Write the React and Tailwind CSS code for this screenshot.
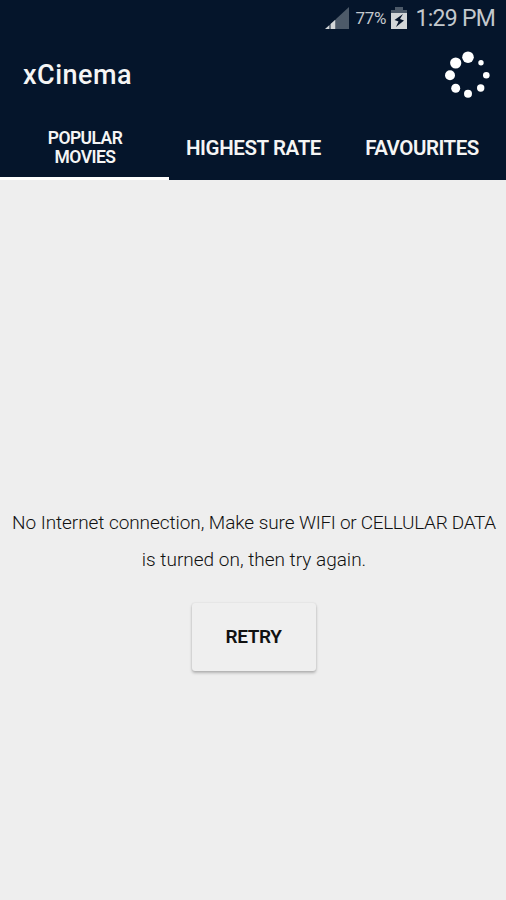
import { useState } from 'react';

const TABS = [
  { id: 'popular', label: 'POPULAR MOVIES', width: 'w-[169px]', text: 'pl-9 pr-[35px] text-[17.5px] leading-[19px] tracking-[-0.55px]' },
  { id: 'highest', label: 'HIGHEST RATE', width: 'w-[169px]', text: 'text-[20.5px] leading-6 tracking-[-0.4px] whitespace-nowrap' },
  { id: 'favourites', label: 'FAVOURITES', width: 'w-[168px]', text: 'text-[20.5px] leading-6 tracking-[-0.5px] whitespace-nowrap' },
];

// Dots grow clockwise, starting at the top right
const DOTS = [
  [37, 11.7, 2.7],
  [42.3, 24.3, 3.3],
  [36.7, 37, 3.7],
  [24, 42.7, 4],
  [11.7, 37.3, 4.5],
  [6, 24.3, 5],
  [11.7, 12, 5.6],
  [24, 6.2, 5.8],
];

function StatusBar() {
  return (
    <div className="h-9 flex items-center justify-end pr-[11px] text-[#c3c8cd]">
      <svg width="24" height="22" viewBox="0 0 24 22" className="mr-[7px]">
        <path d="M11 12 L24 0 V22 H11 Z" fill="#4d5a69" />
        <path d="M0 22 L4.5 18 V22 Z M5.5 22 V17 L10.5 12.5 V22 Z" fill="#d3d6d8" />
      </svg>
      <span className="text-[17px] leading-none w-[31px] whitespace-nowrap tracking-[-0.4px]">77%</span>
      <svg width="16" height="22" viewBox="0 0 16 22" className="ml-[4px] mr-[9px]">
        <path d="M4 0 H12 V3 H16 V6 H0 V3 H4 Z" fill="#4d5a69" />
        <path d="M0 6 H16 V22 H0 Z" fill="#d3d6d8" />
        <path d="M12 7 L3.5 13 L7.5 14.5 L5 20 L13 13.5 L9 12 Z" fill="#07152b" />
      </svg>
      <span className="text-[23px] leading-none whitespace-nowrap tracking-[-0.75px]">1:29 PM</span>
    </div>
  );
}

function Spinner() {
  return (
    <svg width="48" height="48" viewBox="0 0 48 48" fill="#fff">
      {DOTS.map(([cx, cy, r]) => (
        <circle key={`${cx}-${cy}`} cx={cx} cy={cy} r={r} />
      ))}
    </svg>
  );
}

export default function App() {
  const [active, setActive] = useState('popular');

  return (
    <div className="w-full h-screen flex flex-col overflow-hidden bg-[#eeeeee] font-['Roboto',sans-serif]">
      <header className="shrink-0 h-[180px] bg-[#05152b] text-[#f5f5f5] flex flex-col">
        <StatusBar />
        <div className="h-[78px] flex items-center justify-between pl-[23px] pr-[14px]">
          <h1 className="text-[27px] leading-none font-medium tracking-[0.5px] pt-px">xCinema</h1>
          <Spinner />
        </div>
        <nav className="flex-1 flex">
          {TABS.map((tab) => (
            <button
              key={tab.id}
              onClick={() => setActive(tab.id)}
              className={`${tab.width} ${tab.text} pt-[4px] font-semibold text-center border-b-[3px] ${
                active === tab.id ? 'border-white' : 'border-transparent'
              }`}
            >
              {tab.label}
            </button>
          ))}
        </nav>
      </header>

      <main className="flex-1 flex flex-col items-center pt-[324px]">
        <p className="text-center text-[19px] leading-[37px] text-[#111] font-light whitespace-nowrap pl-[2px]">
          <span className="tracking-[-0.07px]">No Internet connection, Make sure </span>
          <span className="tracking-[-0.32px]">WIFI or CELLULAR DATA</span>
          <br />
          is turned on, then try again.
        </p>
        <button className="mt-[25px] ml-px w-[124px] h-[68px] rounded-[3px] bg-[#efefef] text-[19px] font-semibold tracking-[-0.4px] text-[#111] shadow-[0_2px_3px_rgba(0,0,0,0.25),0_0_2px_rgba(0,0,0,0.1)]">
          RETRY
        </button>
      </main>
    </div>
  );
}
